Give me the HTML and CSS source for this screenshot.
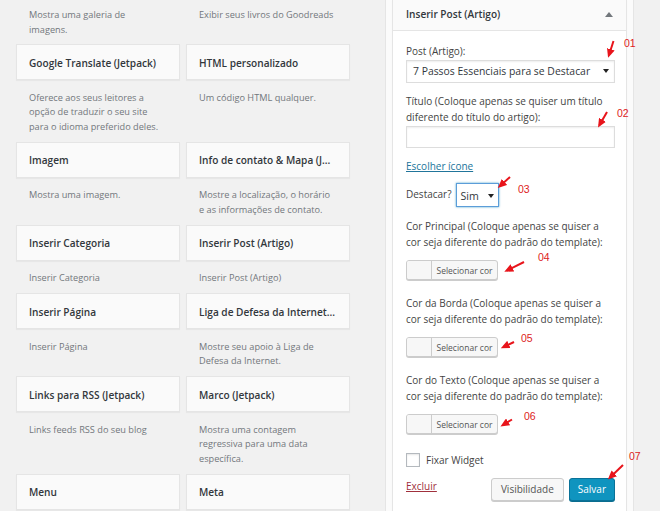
FILE: index.html
```html
<!DOCTYPE html>
<html lang="pt-BR">
<head>
<meta charset="utf-8">
<title>Widgets</title>
<link rel="stylesheet" href="styles.css">
</head>
<body>
<div class="screen">
  <section class="available">
    <div class="grid">
      <div class="item top"><p class="desc">Mostra uma galeria de imagens.</p></div>
      <div class="item top"><p class="desc">Exibir seus livros do Goodreads</p></div>

      <div class="item"><div class="card">Google Translate (Jetpack)</div><p class="desc">Oferece aos seus leitores a opção de traduzir o seu site para o idioma preferido deles.</p></div>
      <div class="item"><div class="card">HTML personalizado</div><p class="desc">Um código HTML qualquer.</p></div>

      <div class="item"><div class="card">Imagem</div><p class="desc">Mostra uma imagem.</p></div>
      <div class="item"><div class="card">Info de contato &amp; Mapa (J...</div><p class="desc">Mostre a localização, o horário e as informações de contato.</p></div>

      <div class="item"><div class="card">Inserir Categoria</div><p class="desc">Inserir Categoria</p></div>
      <div class="item"><div class="card">Inserir Post (Artigo)</div><p class="desc">Inserir Post (Artigo)</p></div>

      <div class="item"><div class="card">Inserir Página</div><p class="desc">Inserir Página</p></div>
      <div class="item"><div class="card">Liga de Defesa da Internet...</div><p class="desc">Mostre seu apoio à Liga de Defesa da Internet.</p></div>

      <div class="item"><div class="card">Links para RSS (Jetpack)</div><p class="desc">Links feeds RSS do seu blog</p></div>
      <div class="item"><div class="card">Marco (Jetpack)</div><p class="desc">Mostra uma contagem regressiva para uma data específica.</p></div>

      <div class="item"><div class="card">Menu</div></div>
      <div class="item"><div class="card">Meta</div></div>
    </div>
  </section>

  <aside class="sidebar">
    <div class="widget">
      <div class="widget-top">
        <span class="widget-title">Inserir Post (Artigo)</span>
        <span class="toggle"></span>
      </div>
      <div class="widget-inside">
        <p class="field-label first">Post (Artigo):</p>
        <div class="select wide"><span>7 Passos Essenciais para se Destacar</span><span class="caret"></span></div>

        <p class="field-label gap-title">Título (Coloque apenas se quiser um título diferente do título do artigo):</p>
        <div class="text-input"></div>

        <a class="icon-link">Escolher ícone</a>

        <div class="inline-row">
          <span class="field-label">Destacar?</span>
          <div class="select small focus"><span>Sim</span><span class="caret"></span></div>
        </div>

        <p class="field-label color-label first-color">Cor Principal (Coloque apenas se quiser a cor seja diferente do padrão do template):</p>
        <div class="color-btn"><span class="swatch"></span><span class="color-text">Selecionar cor</span></div>

        <p class="field-label color-label">Cor da Borda (Coloque apenas se quiser a cor seja diferente do padrão do template):</p>
        <div class="color-btn"><span class="swatch"></span><span class="color-text">Selecionar cor</span></div>

        <p class="field-label color-label">Cor do Texto (Coloque apenas se quiser a cor seja diferente do padrão do template):</p>
        <div class="color-btn"><span class="swatch"></span><span class="color-text">Selecionar cor</span></div>

        <div class="check-row"><span class="checkbox"></span><span class="field-label">Fixar Widget</span></div>

        <div class="actions">
          <a class="delete">Excluir</a>
          <div class="buttons">
            <span class="btn">Visibilidade</span>
            <span class="btn primary">Salvar</span>
          </div>
        </div>
      </div>
    </div>
  </aside>

  <svg class="arrows" width="660" height="511" viewBox="0 0 660 511" aria-hidden="true">
    <defs>
      <marker id="head" markerUnits="userSpaceOnUse" markerWidth="9" markerHeight="8" refX="6" refY="4" orient="auto">
        <path d="M0,0 L9,4 L0,8 Z" fill="#e8141b"/>
      </marker>
    </defs>
    <g stroke="#e8141b" stroke-width="2" marker-end="url(#head)">
      <line x1="613.5" y1="41" x2="609" y2="55"/>
      <line x1="607" y1="112" x2="599.5" y2="125"/>
      <line x1="510" y1="177" x2="500" y2="186"/>
      <line x1="524" y1="262" x2="507" y2="270.5"/>
      <line x1="514" y1="342" x2="503.5" y2="347"/>
      <line x1="512" y1="419.5" x2="503" y2="425"/>
      <line x1="623" y1="465" x2="610" y2="477.5"/>
    </g>
  </svg>
  <span class="num n01">01</span>
  <span class="num n02">02</span>
  <span class="num n03">03</span>
  <span class="num n04">04</span>
  <span class="num n05">05</span>
  <span class="num n06">06</span>
  <span class="num n07">07</span>
</div>
</body>
</html>
```
FILE: styles.css
```css
* { box-sizing: border-box; }

html, body {
  margin: 0;
  padding: 0;
}

body {
  width: 660px;
  height: 511px;
  overflow: hidden;
  background: #f1f1f1;
  font-family: "Open Sans", "Noto Sans", sans-serif;
  color: #444;
}

.screen {
  position: relative;
  display: flex;
  align-items: stretch;
  height: 511px;
  padding-left: 16px;
  overflow: hidden;
}

/* ---------- available widgets ---------- */
.available {
  flex: none;
  width: 334px;
}

.grid {
  display: grid;
  grid-template-columns: 164px 164px;
  column-gap: 6px;
}

.card {
  height: 36px;
  display: flex;
  align-items: center;
  padding: 1px 8px 0 12px;
  background: #fafafa;
  border: 1px solid #e5e5e5;
  box-shadow: 0 1px 1px rgba(0, 0, 0, 0.04);
  font-size: 10.1px;
  font-weight: 600;
  color: #32373c;
  white-space: nowrap;
}

.desc {
  margin: 0;
  padding: 10.5px 16px 7.5px 13px;
  font-size: 9.2px;
  line-height: 14.5px;
  color: #72777c;
}

.item.top .desc {
  padding-top: 8px;
  padding-bottom: 7px;
}

/* ---------- sidebar ---------- */
.sidebar {
  flex: none;
  width: 249px;
  margin-left: 35px;
  padding: 0 6px;
  background: #fbfbfb;
  border-left: 1px solid #e5e5e5;
  border-right: 1px solid #e5e5e5;
}

.widget {
  background: #fff;
  border: 1px solid #e5e5e5;
  border-top: none;
  box-shadow: 0 1px 1px rgba(0, 0, 0, 0.04);
}

.widget-top {
  height: 31px;
  display: flex;
  align-items: center;
  padding: 0 13px 2px;
  background: #fafafa;
  border-bottom: 1px solid #e5e5e5;
}

.widget-title {
  font-size: 10.1px;
  font-weight: 600;
  color: #32373c;
}

.toggle {
  margin-left: auto;
  width: 0;
  height: 0;
  border-left: 4px solid transparent;
  border-right: 4px solid transparent;
  border-bottom: 5px solid #72777c;
}

.widget-inside {
  padding: 13px 11px 24px 13px;
}

.field-label {
  margin: 0;
  font-size: 10px;
  line-height: 15.5px;
  color: #444;
}

.gap-title { margin-top: 11.5px; padding-right: 4px; }

.select {
  display: flex;
  align-items: center;
  justify-content: space-between;
  background: #fff;
  border: 1px solid #ddd;
  box-shadow: inset 0 1px 2px rgba(0, 0, 0, 0.07);
  color: #32373c;
}

.select.wide {
  height: 23px;
  padding: 0 5px 0 6px;
  font-size: 10.4px;
}

.select.small {
  width: 43px;
  height: 24px;
  padding: 1px 4px 0 4px;
  font-size: 10.6px;
}

.select.focus {
  border-color: #5b9dd9;
  box-shadow: 0 0 2px rgba(30, 140, 190, 0.8);
}

.caret {
  width: 0;
  height: 0;
  border-left: 3px solid transparent;
  border-right: 3px solid transparent;
  border-top: 4px solid #222;
}

.text-input {
  height: 22px;
  margin-top: 0.5px;
  background: #fff;
  border: 1px solid #ddd;
  box-shadow: inset 0 1px 2px rgba(0, 0, 0, 0.07);
}

.icon-link {
  display: block;
  width: max-content;
  margin-top: 11px;
  font-size: 10px;
  line-height: 15.5px;
  color: #21759b;
  text-decoration: underline;
}

.inline-row {
  display: flex;
  align-items: center;
  gap: 4px;
  margin-top: 9px;
}

.color-label {
  margin-top: 16px;
  padding-right: 4px;
}

.color-label.first-color { margin-top: 12px; }

.color-btn {
  display: flex;
  width: 92px;
  height: 20px;
  margin-top: 10px;
  background: #f7f7f7;
  border: 1px solid #ccc;
  border-radius: 3px;
  box-shadow: 0 1px 0 #ccc;
  overflow: hidden;
}

.swatch {
  width: 25px;
  border-right: 1px solid #ccc;
  background: #f7f7f7;
}

.color-text {
  flex: 1;
  display: flex;
  align-items: center;
  justify-content: center;
  font-size: 8.5px;
  color: #555;
}

.check-row {
  display: flex;
  align-items: center;
  gap: 6px;
  margin-top: 18.5px;
}

.checkbox {
  width: 14px;
  height: 14px;
  background: #fff;
  border: 1px solid #b4b9be;
  box-shadow: inset 0 1px 2px rgba(0, 0, 0, 0.1);
}

.actions {
  display: flex;
  align-items: center;
  margin-top: 9.5px;
}

.delete {
  margin-bottom: 7px;
  font-size: 10px;
  color: #a0303c;
  text-decoration: underline;
}

.buttons {
  display: flex;
  gap: 5px;
  margin-left: auto;
}

.btn {
  display: flex;
  align-items: center;
  height: 23px;
  padding: 0 9px;
  background: #f7f7f7;
  border: 1px solid #ccc;
  border-radius: 3px;
  box-shadow: 0 1px 0 #ccc;
  font-size: 10px;
  color: #555;
}

.btn.primary {
  padding: 0 8px;
  background: #0f94bf;
  border-color: #0a7298;
  box-shadow: 0 1px 0 #0a6d8f;
  color: #fff;
}

/* ---------- annotations ---------- */
.arrows {
  position: absolute;
  top: 0;
  left: 0;
  pointer-events: none;
}

.num {
  position: absolute;
  font-family: "Liberation Sans", Arial, sans-serif;
  font-size: 10.5px;
  line-height: 12px;
  color: #dd2222;
}

.n01 { left: 624px; top: 37px; }
.n02 { left: 617px; top: 107px; }
.n03 { left: 518px; top: 183px; }
.n04 { left: 538px; top: 251px; }
.n05 { left: 521px; top: 332px; }
.n06 { left: 524px; top: 410px; }
.n07 { left: 629px; top: 450px; }
```
